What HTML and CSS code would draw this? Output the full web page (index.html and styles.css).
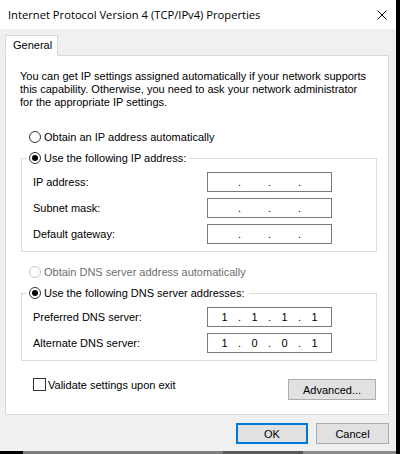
FILE: index.html
```html
<!DOCTYPE html>
<html>
<head>
<meta charset="utf-8">
<title>Internet Protocol Version 4 (TCP/IPv4) Properties</title>
<link rel="stylesheet" href="styles.css">
</head>
<body>
<div class="screen">
  <div class="window">
    <div class="titlebar">
      <span class="title">Internet Protocol Version 4 (TCP/IPv4) Properties</span>
      <svg class="close" width="10" height="10" viewBox="0 0 10 10"><path d="M0.5 0.5 L9.5 9.5 M9.5 0.5 L0.5 9.5" stroke="#000" stroke-width="1" fill="none"/></svg>
    </div>
    <div class="content">
      <div class="tabs"><div class="tab">General</div></div>
      <div class="panel">
        <p class="intro">You can get IP settings assigned automatically if your network supports<br>this capability. Otherwise, you need to ask your network administrator<br>for the appropriate IP settings.</p>
        <div class="radio-row top-radio"><span class="radio"></span><span class="rlabel">Obtain an IP address automatically</span></div>
        <div class="group">
          <div class="group-head"><span class="radio checked"></span><span class="rlabel">Use the following IP address:</span></div>
          <div class="field first"><span class="label">IP address:</span><div class="ipbox"><span class="oct"></span><span class="dot">.</span><span class="oct"></span><span class="dot">.</span><span class="oct"></span><span class="dot">.</span><span class="oct"></span></div></div>
          <div class="field"><span class="label">Subnet mask:</span><div class="ipbox"><span class="oct"></span><span class="dot">.</span><span class="oct"></span><span class="dot">.</span><span class="oct"></span><span class="dot">.</span><span class="oct"></span></div></div>
          <div class="field"><span class="label">Default gateway:</span><div class="ipbox"><span class="oct"></span><span class="dot">.</span><span class="oct"></span><span class="dot">.</span><span class="oct"></span><span class="dot">.</span><span class="oct"></span></div></div>
        </div>
        <div class="radio-row disabled-row"><span class="radio disabled"></span><span class="rlabel">Obtain DNS server address automatically</span></div>
        <div class="group">
          <div class="group-head"><span class="radio checked"></span><span class="rlabel">Use the following DNS server addresses:</span></div>
          <div class="field first"><span class="label">Preferred DNS server:</span><div class="ipbox"><span class="oct">1</span><span class="dot">.</span><span class="oct">1</span><span class="dot">.</span><span class="oct">1</span><span class="dot">.</span><span class="oct">1</span></div></div>
          <div class="field"><span class="label">Alternate DNS server:</span><div class="ipbox"><span class="oct">1</span><span class="dot">.</span><span class="oct">0</span><span class="dot">.</span><span class="oct">0</span><span class="dot">.</span><span class="oct">1</span></div></div>
        </div>
        <div class="bottom-row">
          <div class="check-row"><span class="checkbox"></span><span class="clabel">Validate settings upon exit</span></div>
          <button class="btn advanced">Advanced...</button>
        </div>
      </div>
      <div class="buttons">
        <button class="btn btn-ok">OK</button>
        <button class="btn btn-cancel">Cancel</button>
      </div>
    </div>
  </div>
  <div class="strip">
    <span class="seg s1"></span><span class="seg s2"></span><span class="seg s3"></span><span class="seg s4"></span><span class="seg s5"></span>
  </div>
</div>
</body>
</html>
```
FILE: styles.css
```css
* { box-sizing: border-box; }
html, body { margin: 0; padding: 0; }
body {
  width: 400px;
  height: 454px;
  overflow: hidden;
  background: #000;
  font-family: "Liberation Sans", Arial, sans-serif;
  font-size: 11px;
  color: #000;
}
.screen { display: flex; flex-direction: column; width: 400px; height: 454px; }
.window {
  width: 396px;
  height: 451px;
  background: #f0f0f0;
  display: flex;
  flex-direction: column;
}
.titlebar {
  height: 29px;
  background: #fff;
  display: flex;
  align-items: center;
  padding-left: 8px;
}
.title {
  font-family: "Open Sans", "Noto Sans", sans-serif;
  font-size: 11.2px;
  color: #000;
}
.close { margin-left: auto; margin-right: 9px; }
.content { padding: 6px 0 0 5px; display: flex; flex-direction: column; }
.tabs { display: flex; height: 20px; }
.tab {
  position: relative;
  z-index: 1;
  width: 53px;
  height: 21px;
  background: #fff;
  border: 1px solid #d9d9d9;
  border-bottom: 1px solid #fff;
  padding-left: 7px;
  line-height: 19px;
}
.panel {
  width: 384px;
  height: 360px;
  background: #fff;
  border: 1px solid #d9d9d9;
  padding: 14px 11px 0 14px;
  display: flex;
  flex-direction: column;
}
.intro { margin: 0; line-height: 13px; }
.radio-row { display: flex; align-items: center; height: 14px; padding-left: 9px; }
.top-radio { margin-top: 21px; }
.disabled-row { margin-top: 13px; color: #6d6d6d; }
.radio {
  width: 12px;
  height: 12px;
  border: 1px solid #333;
  border-radius: 50%;
  background: #fff;
  display: flex;
  align-items: center;
  justify-content: center;
  flex: none;
}
.radio.checked::after {
  content: "";
  width: 6px;
  height: 6px;
  border-radius: 50%;
  background: #000;
}
.radio.disabled { border-color: #c4c4c4; }
.rlabel { margin-left: 3px; line-height: 14px; white-space: nowrap; }
.group {
  margin-top: 14px;
  margin-left: 1px;
  border: 1px solid #dcdcdc;
  padding: 0 0 7px 11px;
  display: flex;
  flex-direction: column;
}
.group-head {
  align-self: flex-start;
  display: flex;
  align-items: center;
  height: 14px;
  margin-top: -8px;
  margin-left: -6px;
  padding: 0 4px 0 2px;
  background: #fff;
}
.field { display: flex; align-items: center; height: 20px; margin-top: 6px; }
.field.first { margin-top: 7px; }
.label { width: 174px; flex: none; }
.ipbox {
  width: 125px;
  height: 20px;
  border: 1px solid #7a7a7a;
  display: flex;
  align-items: center;
  padding-left: 3px;
}
.oct { width: 27px; text-align: center; }
.dot { width: 3px; }
.bottom-row {
  display: flex;
  justify-content: space-between;
  align-items: flex-start;
  margin-top: 17px;
}
.check-row { display: flex; align-items: center; padding-left: 13px; }
.checkbox {
  width: 13px;
  height: 13px;
  border: 1px solid #333;
  background: #fff;
  flex: none;
}
.clabel { margin-left: 2px; }
.btn {
  font-family: "Liberation Sans", Arial, sans-serif;
  font-size: 11px;
  color: #000;
  background: #e1e1e1;
  border: 1px solid #adadad;
  height: 21px;
  padding: 0;
  margin: 0;
}
.advanced { width: 88px; margin-top: 1px; margin-right: 1px; }
.buttons {
  display: flex;
  justify-content: flex-end;
  gap: 8px;
  margin-top: 8px;
  padding-right: 7px;
}
.btn-ok { width: 72px; border: 2px solid #0078d7; }
.btn-cancel { width: 73px; }
.strip { display: flex; height: 3px; }
.seg { display: block; height: 3px; }
.s1 { width: 23px; background: #000; }
.s2 { width: 200px; background: #7d7d7d; }
.s3 { width: 80px; background: #5a5a5a; }
.s4 { width: 93px; background: #8a8a8a; }
.s5 { width: 4px; background: #000; }
```
